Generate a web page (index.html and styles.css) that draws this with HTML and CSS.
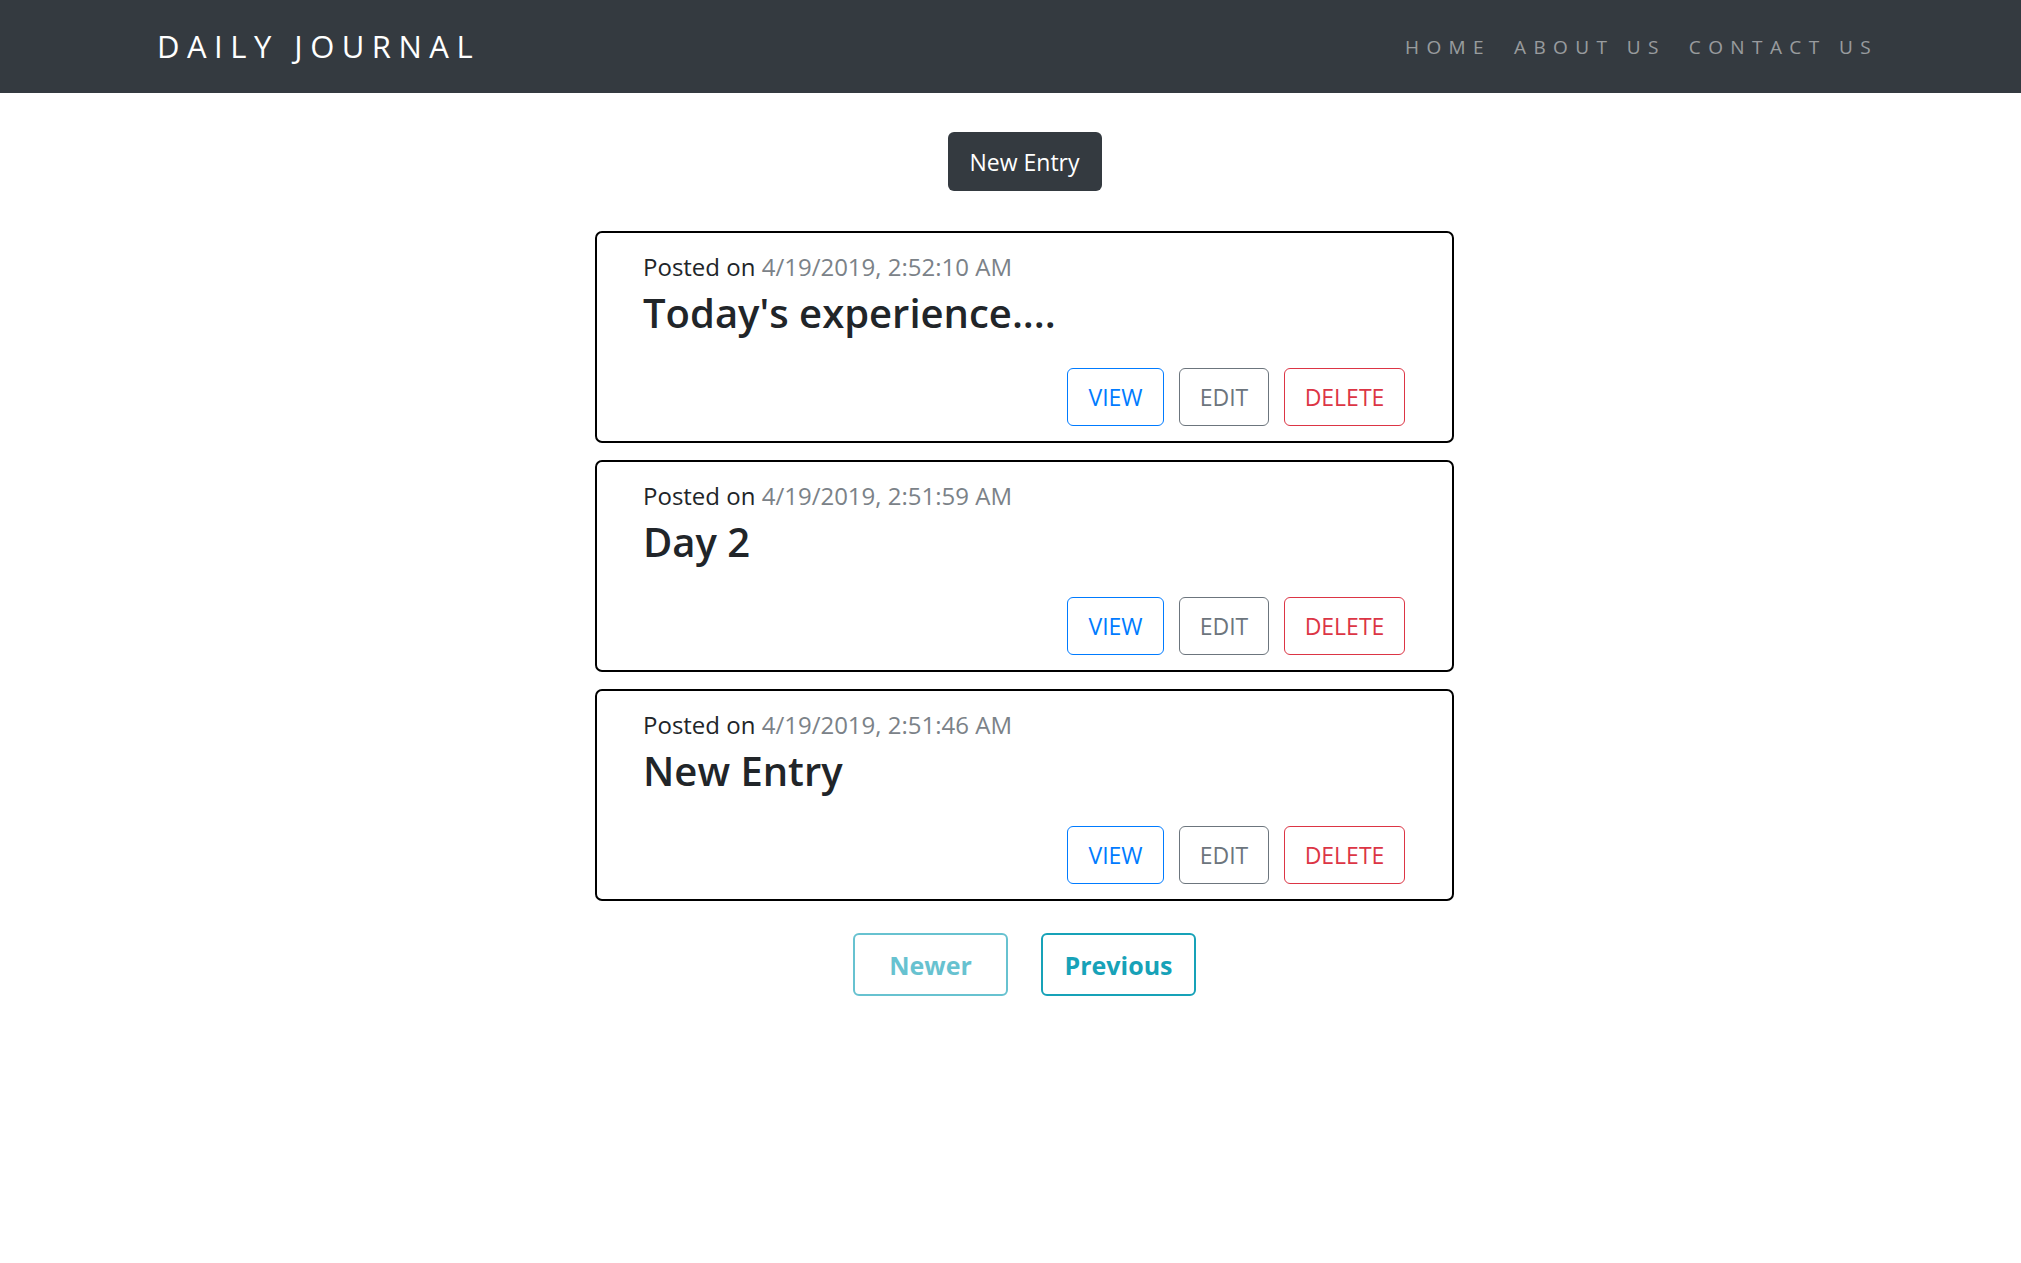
FILE: index.html
```html
<!DOCTYPE html>
<html lang="en">
<head>
<meta charset="utf-8">
<title>Daily Journal</title>
<link rel="stylesheet" href="styles.css">
</head>
<body>
<nav class="navbar">
  <a class="brand" href="#">DAILY JOURNAL</a>
  <ul class="nav-links">
    <li><a href="#">HOME</a></li>
    <li><a href="#">ABOUT US</a></li>
    <li><a href="#">CONTACT US</a></li>
  </ul>
</nav>
<main class="main">
  <a class="btn btn-dark" href="#">New Entry</a>
  <div class="entries">
    <div class="entry">
      <p class="posted">Posted on <span class="date">4/19/2019, 2:52:10 AM</span></p>
      <h2 class="entry-title">Today's experience....</h2>
      <div class="actions">
        <a class="btn btn-outline view" href="#">VIEW</a>
        <a class="btn btn-outline edit" href="#">EDIT</a>
        <a class="btn btn-outline delete" href="#">DELETE</a>
      </div>
    </div>
    <div class="entry">
      <p class="posted">Posted on <span class="date">4/19/2019, 2:51:59 AM</span></p>
      <h2 class="entry-title">Day 2</h2>
      <div class="actions">
        <a class="btn btn-outline view" href="#">VIEW</a>
        <a class="btn btn-outline edit" href="#">EDIT</a>
        <a class="btn btn-outline delete" href="#">DELETE</a>
      </div>
    </div>
    <div class="entry">
      <p class="posted">Posted on <span class="date">4/19/2019, 2:51:46 AM</span></p>
      <h2 class="entry-title">New Entry</h2>
      <div class="actions">
        <a class="btn btn-outline view" href="#">VIEW</a>
        <a class="btn btn-outline edit" href="#">EDIT</a>
        <a class="btn btn-outline delete" href="#">DELETE</a>
      </div>
    </div>
  </div>
  <div class="pager">
    <a class="btn pager-btn disabled" href="#">Newer</a>
    <a class="btn pager-btn" href="#">Previous</a>
  </div>
</main>
</body>
</html>
```
FILE: styles.css
```css
* { box-sizing: border-box; }
html, body { margin: 0; padding: 0; }
body {
  font-family: "Open Sans", "Noto Sans", sans-serif;
  color: #212529;
  background: #fff;
  font-size: 20px;
}
a { text-decoration: none; }

.navbar {
  height: 93px;
  background: #343a40;
  display: flex;
  align-items: center;
  justify-content: space-between;
  padding: 0 143px 0 157px;
}
.brand {
  color: #fff;
  font-size: 31px;
  letter-spacing: 7.5px;
  margin-top: -2px;
}
.nav-links {
  list-style: none;
  display: flex;
  gap: 23px;
  margin: 0;
  padding: 0;
}
.nav-links a {
  color: rgba(255,255,255,0.5);
  font-size: 19px;
  letter-spacing: 7.4px;
}

.main {
  display: flex;
  flex-direction: column;
  align-items: center;
  padding-left: 28px;
}

.btn {
  display: inline-flex;
  align-items: center;
  justify-content: center;
  border: 1.25px solid transparent;
  border-radius: 6px;
  font-size: 23px;
  height: 58px;
  padding: 0 19px;
}
.btn-dark {
  margin-top: 39px;
  background: #343a40;
  color: #fff;
  width: 154px;
  height: 59px;
}

.entries {
  margin-top: 40px;
  width: 859px;
  display: flex;
  flex-direction: column;
  gap: 17px;
}
.entry {
  border: 2px solid #000;
  border-radius: 7px;
  padding: 17px 47px 15px 46px;
  height: 212px;
  display: flex;
  flex-direction: column;
}
.posted {
  margin: 0;
  font-size: 24px;
  line-height: 34px;
}
.date { color: #7b8288; }
.entry-title {
  margin: 4px 0 0;
  font-size: 40px;
  font-weight: 600;
  line-height: 50px;
}
.actions {
  margin-top: auto;
  display: flex;
  justify-content: flex-end;
  gap: 15px;
}
.btn-outline { background: #fff; }
.view { color: #007bff; border-color: #007bff; width: 97px; }
.edit { color: #6c757d; border-color: #6c757d; width: 90px; }
.delete { color: #dc3545; border-color: #dc3545; width: 121px; }

.pager {
  margin-top: 32px;
  display: flex;
  gap: 33px;
}
.pager-btn {
  width: 155px;
  height: 63px;
  font-size: 25px;
  font-weight: 700;
  color: #17a2b8;
  border: 2px solid #17a2b8;
}
.pager-btn.disabled { opacity: 0.65; }
```
